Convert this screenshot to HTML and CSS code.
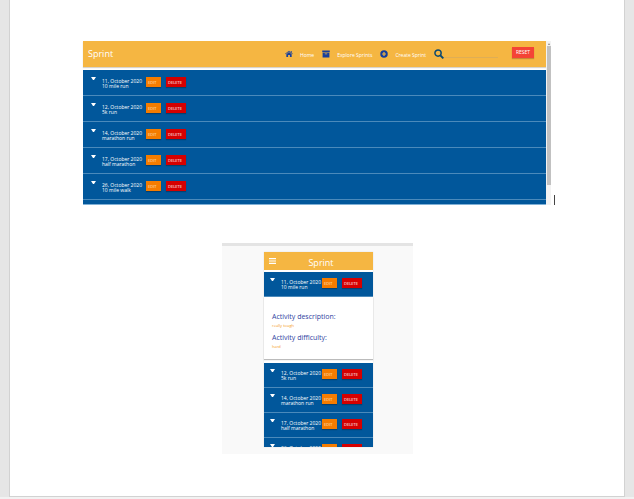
FILE: index.html
```html
<!DOCTYPE html>
<html lang="en">
<head>
<meta charset="utf-8">
<title>Sprint</title>
<link rel="stylesheet" href="styles.css">
</head>
<body>
<main class="sheet">
  <section class="figure">
    <div class="desktop">
      <header class="bar">
        <h1 class="brand">Sprint</h1>
        <nav class="nav">
          <a href="#home"><svg class="icon" viewBox="0 0 18 16"><path d="M9 3.6 3 8.7V14.5q0 .5.5.5H7v-4.500h4V15h3.500q.5 0 .5-.5V8.700zM17.700 7.700 15 5.500V1.500h-2v2.300L9.800 1.200q-.8-.6-1.600 0L.3 7.700l.9 1.100L9 2.500l7.800 6.300z"/></svg><span>Home</span></a>
          <a href="#explore"><svg class="icon" viewBox="0 0 16 16"><path d="M.5 1h15v3.500H.5zM1.200 5.500h13.600V15H1.200zM5.500 7v1.500h5V7z" fill-rule="evenodd"/></svg><span>Explore Sprints</span></a>
          <a href="#create"><svg class="icon" viewBox="0 0 16 16"><path d="M8 .5a7.500 7.500 0 1 0 0 15 7.500 7.500 0 0 0 0-15zM6.800 4h2.400v2.800H12v2.400H9.200V12H6.800V9.200H4V6.800h2.800z" fill-rule="evenodd"/></svg><span>Create Sprint</span></a>
        </nav>
        <label class="search"><svg class="icon icon-search" viewBox="0 0 16 16"><circle cx="6.500" cy="6.500" r="5" fill="none" stroke-width="2.400"/><path d="m10 10 5 5" stroke-width="3"/></svg><input type="search" aria-label="Search"></label>
        <button class="reset">RESET</button>
      </header>
      <ul class="list">
        <li class="row"><i class="arrow"></i><p>11, October 2020<br>10 mile run</p><button class="edit">EDIT</button><button class="delete">DELETE</button></li>
        <li class="row"><i class="arrow"></i><p>12, October 2020<br>5k run</p><button class="edit">EDIT</button><button class="delete">DELETE</button></li>
        <li class="row"><i class="arrow"></i><p>14, October 2020<br>marathon run</p><button class="edit">EDIT</button><button class="delete">DELETE</button></li>
        <li class="row"><i class="arrow"></i><p>17, October 2020<br>half marathon</p><button class="edit">EDIT</button><button class="delete">DELETE</button></li>
        <li class="row"><i class="arrow"></i><p>26, October 2020<br>10 mile walk</p><button class="edit">EDIT</button><button class="delete">DELETE</button></li>
        <li class="rest"></li>
      </ul>
    </div>
    <div class="scroll"><svg viewBox="0 0 4 4"><path d="M1 3 2 1l1 2z"/></svg><div class="thumb"></div></div>
    <div class="caret"></div>
  </section>
  <section class="stage">
    <div class="phone">
      <header class="phone-bar">
        <button class="menu" aria-label="Menu"><svg viewBox="0 0 7 6"><path d="M0 .7h7M0 3h7M0 5.300h7"/></svg></button>
        <h2 class="brand phone-brand">Sprint</h2>
      </header>
      <div class="row phone-row"><i class="arrow"></i><p>11, October 2020<br>10 mile run</p><button class="edit">EDIT</button><button class="delete">DELETE</button></div>
      <article class="card">
        <h3>Activity description:</h3>
        <p>really tough</p>
        <h3>Activity difficulty:</h3>
        <p>hard</p>
      </article>
      <ul class="phone-list">
        <li class="row phone-row"><i class="arrow"></i><p>12, October 2020<br>5k run</p><button class="edit">EDIT</button><button class="delete">DELETE</button></li>
        <li class="row phone-row"><i class="arrow"></i><p>14, October 2020<br>marathon run</p><button class="edit">EDIT</button><button class="delete">DELETE</button></li>
        <li class="row phone-row"><i class="arrow"></i><p>17, October 2020<br>half marathon</p><button class="edit">EDIT</button><button class="delete">DELETE</button></li>
        <li class="row phone-row"><i class="arrow"></i><p>26, October 2020</p><button class="edit">EDIT</button><button class="delete">DELETE</button></li>
      </ul>
    </div>
  </section>
</main>
</body>
</html>
```
FILE: styles.css
```css
* { box-sizing: border-box; }

body {
  margin: 0;
  padding: 0 9px;
  background: #e6e6e6;
  font-family: "Open Sans", "Noto Sans", sans-serif;
  font-size: 5px;
  line-height: 5px;
  color: #fff;
  border-bottom: 2px solid #f2f2f2;
}

h1, h2, h3, p, ul { margin: 0; padding: 0; font-weight: 400; }
li { list-style: none; }

button {
  display: block;
  flex: none;
  border: 0;
  margin: 0;
  padding: 0;
  font: inherit;
  color: #fff;
}

.sheet {
  background: #fff;
  border: solid #d2d2d2;
  border-width: 0 1px 1px;
  padding: 41px 69px 42px 73px;
}

.figure { display: flex; }
.desktop { flex: 1; }

.bar {
  display: flex;
  align-items: center;
  height: 26px;
  padding: 0 12px 0 5px;
  background: #f5b642;
  box-shadow: 0 1px 1px #d8d4cc;
}

.brand { font-size: 9px; line-height: 12px; }

.nav { display: flex; gap: 8px; margin-left: auto; }
.nav a {
  display: flex;
  align-items: center;
  gap: 7px;
  color: #fff;
  text-decoration: none;
}
.nav span { padding-top: 2px; }

.icon { width: 8px; height: 8px; fill: #173f9c; flex: none; }
.icon-search { width: 10px; height: 10px; stroke: #0d4a70; }

.search { display: flex; align-items: center; margin-left: 8px; }
.search input {
  width: 54px;
  height: 8px;
  margin: 0 14px 0 0;
  padding: 0;
  border: 0;
  border-bottom: 1px solid #dfae55;
  background: none;
  font: inherit;
  appearance: none;
}

.reset {
  width: 22px;
  height: 11px;
  margin-bottom: 4px;
  background: #f44336;
  box-shadow: 0 1px 1px #c98a35;
}

.list { margin-top: 3px; background: #01579b; border-bottom: 1px solid #7fb0d6; }

.row {
  display: flex;
  align-items: flex-start;
  height: 26px;
  padding: 7px 0 0 8px;
  border-bottom: 1px solid #4b8abb;
  background: #01579b;
}
.row p { width: 44px; padding-top: 2px; white-space: nowrap; }
.rest { height: 4px; }

.arrow {
  width: 5px;
  margin-right: 6px;
  border: solid transparent;
  border-width: 3px 2px 0;
  border-top-color: #fff;
}

.edit, .delete {
  height: 10px;
  padding-left: 2px;
  font-size: 4px;
  text-align: left;
  box-shadow: 0 1px 1px #06406f;
}
.edit { width: 15px; margin-right: 5px; background: #f57c00; color: #ffe3c4; }
.delete { width: 20px; background: #d50000; }

.scroll { width: 5px; padding: 1px 0 0 1px; background: #f3f3f3; }
.scroll svg { display: block; width: 4px; height: 4px; fill: #888; }
.thumb { height: 139px; background: #c1c1c1; }

.caret {
  align-self: flex-end;
  width: 1px;
  height: 10px;
  margin-left: 3px;
  background: #444;
}

.stage {
  width: 191px;
  margin: 38px auto 0 139px;
  padding: 6px 40px 7px 42px;
  border-top: 3px solid #e4e4e4;
  background: #f9f9f9;
}

.phone { background: #fff; box-shadow: 0 0 1px #ccc; }
.phone-bar {
  display: grid;
  grid-template-columns: 1fr auto 1fr;
  height: 18px;
  margin-bottom: 2px;
  padding: 0 0 0 5px;
  background: #f5b642;
}
.phone-brand { padding-top: 5px; }
.menu { align-self: center; justify-self: start; width: 7px; height: 6px; background: none; }
.menu svg { display: block; stroke: #fff; stroke-width: 1.2; }

.phone-row { height: 25px; padding: 6px 0 0 6px; }
.phone-row p { width: 41px; }

.card {
  height: 62px;
  padding: 15px 8px 0;
  box-shadow: 0 1px 1px #bbb;
  color: #f59a23;
  font-size: 4px;
}
.card h3 { color: #303f9f; font-size: 7px; line-height: 10px; }
.card p { line-height: 8px; margin-bottom: 3px; }

.phone-list { height: 84px; margin-top: 4px; overflow: hidden; }
```
